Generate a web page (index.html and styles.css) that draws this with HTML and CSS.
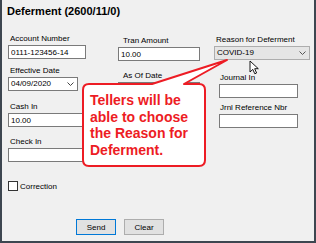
FILE: index.html
```html
<!DOCTYPE html>
<html lang="en">
<head>
    <meta charset="UTF-8">
    <meta name="viewport" content="width=device-width, initial-scale=1.0">
    <title>Deferment</title>
    <link rel="stylesheet" href="styles.css">
</head>
<body>
    <div class="window">
        <h1 class="title">Deferment (2600/11/0)</h1>

        <div class="form">
            <!-- coluna da esquerda -->
            <div class="col col-a">
                <label>Account Number</label>
                <input class="box" type="text" value="0111-123456-14">
                <label class="mt-7">Effective Date</label>
                <div class="box date">
                    <span>04/09/2020</span>
                    <svg class="chevron" width="7" height="4" viewBox="0 0 7 4"><path d="M0.5 0.5 L3.5 3.5 L6.5 0.5" fill="none" stroke="#444" stroke-width="1"/></svg>
                </div>
                <label class="mt-11">Cash In</label>
                <input class="box" type="text" value="10.00">
                <label class="mt-10">Check In</label>
                <input class="box" type="text" value="">
            </div>

            <!-- coluna do meio -->
            <div class="col col-b">
                <label class="mt-2">Tran Amount</label>
                <input class="box" type="text" value="10.00">
                <label class="mt-10">As Of Date</label>
                <input class="box" type="text" value="">
            </div>

            <!-- coluna da direita -->
            <div class="col col-c">
                <label class="mt-1">Reason for Deferment</label>
                <div class="combo">
                    <span>COVID-19</span>
                    <svg class="chevron" width="7" height="4" viewBox="0 0 7 4"><path d="M0.5 0.5 L3.5 3.5 L6.5 0.5" fill="none" stroke="#555" stroke-width="1"/></svg>
                </div>
                <label class="mt-13 indent">Journal In</label>
                <input class="box narrow" type="text" value="">
                <label class="mt-5 indent">Jrnl Reference Nbr</label>
                <input class="box narrow" type="text" value="">
            </div>
        </div>

        <div class="check">
            <span class="check-box"></span>
            <span>Correction</span>
        </div>

        <div class="actions">
            <button class="btn btn-focus">Send</button>
            <button class="btn">Clear</button>
        </div>

        <!-- balão de aviso por cima do formulário -->
        <svg class="callout" width="316" height="243" viewBox="0 0 316 243">
            <path d="M89 84 L152 84 L227 60 L184 84 L199 84 Q205 84 205 90 L205 160 Q205 166 199 166 L89 166 Q83 166 83 160 L83 90 Q83 84 89 84 Z"
                  fill="#fff" stroke="#ed1c24" stroke-width="2" stroke-linejoin="round"/>
        </svg>
        <p class="callout-text">Tellers will be<br>able to choose<br>the Reason for<br>Deferment.</p>

        <svg class="cursor" width="11" height="15" viewBox="0 0 11 15">
            <path d="M1 1 L1 12 L3.8 9.4 L5.8 13.8 L7.6 13 L5.7 8.7 L9.3 8.7 Z" fill="#fff" stroke="#000" stroke-width="0.9" stroke-linejoin="round"/>
        </svg>
    </div>
</body>
</html>
```

FILE: styles.css
```css
body {
    margin: 0;
}
.window {
    position: relative;
    width: 316px;
    height: 243px;
    box-sizing: border-box;
    padding: 5px 0 0 8px;
    background-color: #f0f0f0;
    box-shadow: inset 2px 0 #3d4650, inset -2px 0 #3d4650, inset 0 -2px #3d4650;
    font-family: "Liberation Sans", Arial, sans-serif;
    font-size: 8px;
    color: #000;
    overflow: hidden;
}
.title {
    margin: 0 0 0 -1px;
    font-size: 11px;
    line-height: 13px;
    font-weight: bold;
}

/* Formulário em três colunas */
.form {
    display: flex;
    margin-top: 16px;
}
.col {
    display: flex;
    flex-direction: column;
}
.col label {
    display: block;
    line-height: 10px;
    padding-left: 2px;
    white-space: nowrap;
}
.col-a {
    width: 78px;
}
.col-b {
    width: 82px;
    margin-left: 32px;
}
.col-b label {
    padding-left: 5px;
}
.col-c {
    width: 96px;
    margin-left: 14px;
}
.col-c label.indent {
    padding-left: 6px;
}
.box {
    display: block;
    width: 100%;
    height: 14px;
    box-sizing: border-box;
    margin: 1px 0 0 0;
    padding: 0 2px;
    border: 1px solid #7a7a7a;
    background-color: #fff;
    font: inherit;
    font-size: 8px;
    line-height: 12px;
    color: #000;
    outline: none;
}
.box.narrow {
    width: 79px;
    margin-left: 5px;
}
.date {
    width: 70px;
    display: flex;
    align-items: center;
    justify-content: space-between;
    padding-right: 3px;
}
.combo {
    height: 14px;
    box-sizing: border-box;
    margin-top: 1px;
    padding: 0 3px 0 2px;
    border: 1px solid #adadad;
    background-color: #e5e5e5;
    display: flex;
    align-items: center;
    justify-content: space-between;
    line-height: 12px;
}
.chevron {
    display: block;
}

.mt-1 { margin-top: 1px; }
.mt-2 { margin-top: 2px; }
.mt-5 { margin-top: 5px; }
.mt-7 { margin-top: 7px; }
.mt-10 { margin-top: 10px; }
.mt-11 { margin-top: 11px; }
.mt-13 { margin-top: 13px; }

/* Checkbox */
.check {
    display: flex;
    align-items: center;
    gap: 2px;
    margin-top: 19px;
    height: 10px;
}
.check-box {
    width: 10px;
    height: 10px;
    box-sizing: border-box;
    border: 1px solid #333;
    background-color: #fff;
}

/* Botões */
.actions {
    display: flex;
    gap: 8px;
    margin: 28px 0 0 68px;
}
.btn {
    width: 40px;
    height: 16px;
    padding: 0;
    border: 1px solid #adadad;
    background-color: #e1e1e1;
    font: inherit;
    font-size: 8px;
    color: #000;
}
.btn-focus {
    border-color: #0078d7;
}

/* Balão vermelho */
.callout {
    position: absolute;
    left: 0;
    top: 0;
    pointer-events: none;
}
.callout-text {
    position: absolute;
    left: 90px;
    top: 92px;
    margin: 0;
    font-size: 14px;
    line-height: 16.5px;
    font-weight: bold;
    color: #ed1c24;
}
.cursor {
    position: absolute;
    left: 249px;
    top: 60px;
}
```
